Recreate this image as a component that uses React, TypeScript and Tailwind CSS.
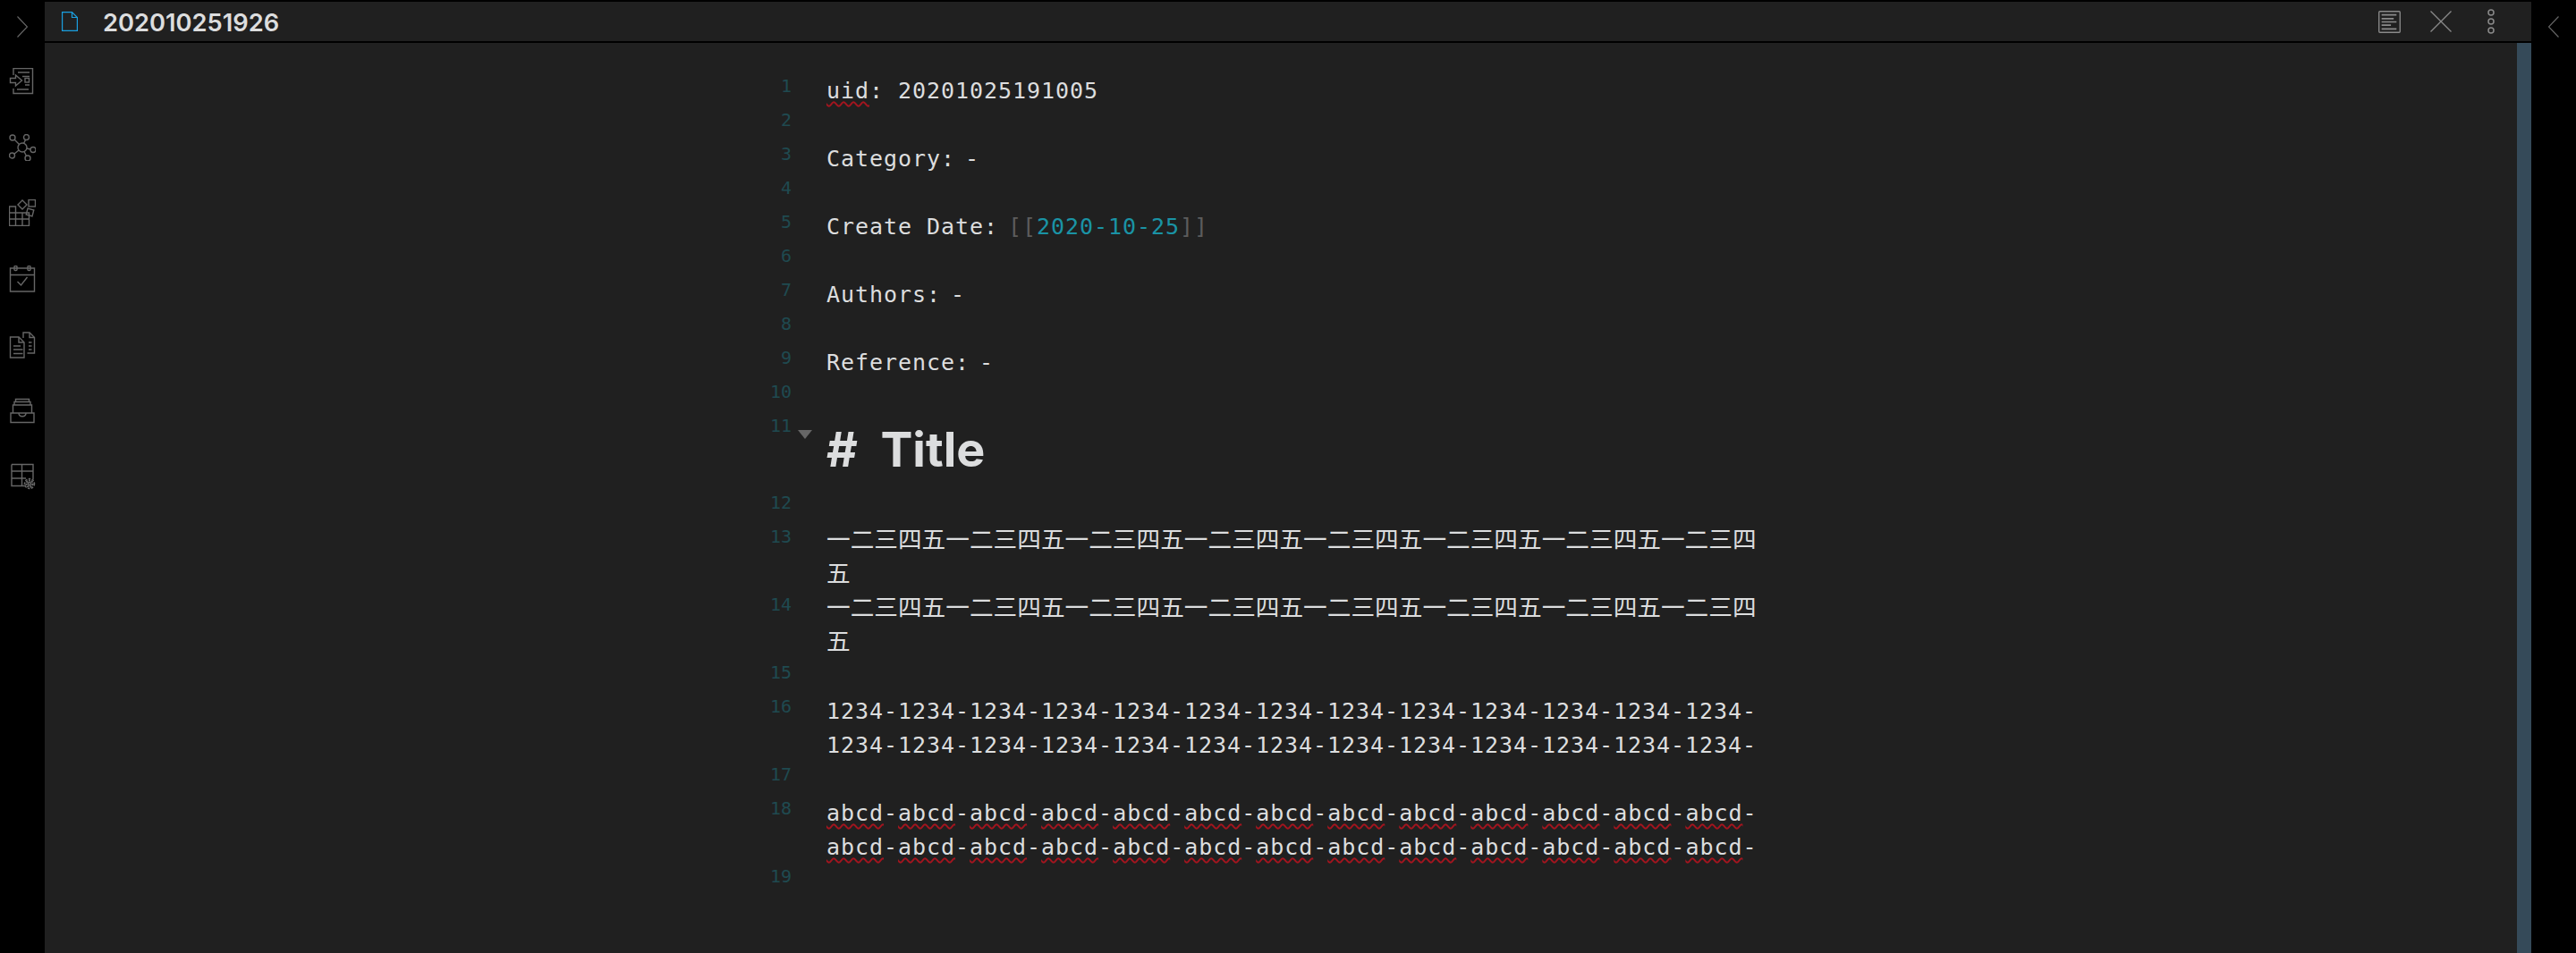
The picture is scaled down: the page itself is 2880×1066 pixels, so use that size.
import React from "react";

const Svg = ({ children, className = "" }: { children: React.ReactNode; className?: string }) => (
  <svg viewBox="0 0 30 30" fill="none" stroke="#666" strokeWidth="1.4" className={"w-[30px] h-[30px] " + className}>
    {children}
  </svg>
);

const sideIcons = [
  <Svg key="a">
    <path d="M5 8V0.5h21.5v28H5V23" />
    <path d="M10 5h13M15 9.5h8M22 24h-13M18 19h5" />
    <path d="M1.5 11.5h6V8l7 6-7 6v-3.5h-6z" />
    <rect x="18" y="11.5" width="4.5" height="4.5" />
  </Svg>,
  <Svg key="b">
    <circle cx="15" cy="15" r="5" />
    <circle cx="4" cy="4" r="3" />
    <circle cx="19.5" cy="3.5" r="3" />
    <circle cx="27" cy="17.5" r="3" />
    <circle cx="3.5" cy="24" r="3" />
    <circle cx="21" cy="27" r="3" />
    <path d="M6 6l5.5 5.5M18.5 6.5l-2 4M20 16l4 1M11 18l-5.500 4.500M17 19.500l2.500 5" />
  </Svg>,
  <Svg key="c">
    <path d="M0.500 8h7v21.500H0.500zM7.500 15h-7M0.500 22h22v7.500H0.500zM7.500 15h7.500v14.500M7.500 22v7.500M15 15h7.500v7.500" />
    <path d="M10 6l5-5 5 5-5 5z" />
    <rect x="22" y="0.500" width="7.500" height="7.500" />
    <rect x="20" y="11" width="7" height="7" transform="rotate(15 23.500 14.500)" />
  </Svg>,
  <Svg key="d">
    <path d="M1.500 3h27v26h-27zM1.500 10.500h27" />
    <rect x="6" y="0.500" width="3" height="5" rx="1" />
    <rect x="21" y="0.500" width="3" height="5" rx="1" />
    <path d="M9.500 18l4 4 7-9" />
  </Svg>,
  <Svg key="e">
    <path d="M16 7V1h7l5.500 5.500V24h-8" />
    <path d="M23 1v5.500h5.500M22 12h3.500M22 16h3.500M22 20h3.500" />
    <path d="M1.500 6h9.500l6 6v17H1.500z" />
    <path d="M11 6v6h6M5 16h8M5 20h10.500M5 24.500h10.500" />
  </Svg>,
  <Svg key="f">
    <path d="M2 18h26v10.500H2z" />
    <path d="M4.500 18V9h21v9M6 9V5.500h18V9M7.500 5.500V2.500h15v3" />
    <path d="M11 18c0 5 8 5 8 0" />
  </Svg>,
  <Svg key="g">
    <path d="M3 1.500h24v17M3 1.500v24h16M3 9h24M3 17h16M14.500 1.500v24" />
    <circle cx="23" cy="23" r="3.500" strokeWidth="2.500" strokeDasharray="2 1" />
    <circle cx="23" cy="23" r="5.500" strokeWidth="1.500" strokeDasharray="2.500 1.500" />
    <circle cx="23" cy="23" r="1.500" />
  </Svg>,
];

const Wavy = ({ children }: { children: React.ReactNode }) => (
  <span className="underline decoration-wavy decoration-[#a5141e] decoration-[1.5px] underline-offset-[3px]">{children}</span>
);

const Dash = () => <span className="-ml-[5px]">-</span>;

const abcd = (n: number) =>
  Array.from({ length: n }).map((_, i) => (
    <React.Fragment key={i}>
      <Wavy>abcd</Wavy>-
    </React.Fragment>
  ));

type Row = { content?: React.ReactNode; tall?: boolean; cjk?: boolean };

const cjk = "一二三四五".repeat(8);
const rows: Row[] = [
  { content: <><Wavy>uid</Wavy>: 20201025191005</> },
  {},
  { content: <>Category: <Dash /></> },
  {},
  {
    content: (
      <>
        Create Date: <span className="-ml-[5px] text-[#5c5c5c]">[[</span>
        <span className="text-[#1a93a5]">2020-10-25</span>
        <span className="text-[#5c5c5c]">]]</span>
      </>
    ),
  },
  {},
  { content: <>Authors: <Dash /></> },
  {},
  { content: <>Reference: <Dash /></> },
  {},
  { tall: true },
  {},
  { content: cjk, cjk: true },
  { content: cjk, cjk: true },
  {},
  { content: "1234-".repeat(26) },
  {},
  { content: abcd(26) },
  {},
];

export default function App() {
  return (
    <div className="flex h-[1066px] w-[2880px] overflow-hidden bg-black">
      <aside className="flex w-[50px] shrink-0 flex-col items-center pt-[18px]">
        <svg viewBox="0 0 12 24" fill="none" stroke="#666" strokeWidth="1.2" className="h-[24px] w-[12px]">
          <path d="M0.500 0.500L11.500 12L0.500 23.500" />
        </svg>
        <div className="mt-[34px] flex flex-col items-center gap-[43.7px]">{sideIcons}</div>
      </aside>

      <main className="flex min-w-0 flex-1 flex-col pt-[2px]">
        <header className="flex h-[44px] shrink-0 items-center bg-[#202020] pl-[19px] pr-[41px]">
          <svg viewBox="0 0 18 22" fill="none" stroke="#1a9fe0" strokeWidth="1.200" className="h-[22px] w-[18px]">
            <path d="M0.600 0.600H11.500L17.400 6.500V21.400H0.600zM11.500 0.600V6.500H17.400" />
          </svg>
          <div className="ml-[28px] flex-1 translate-y-[2px] font-['Inter',sans-serif] text-[27.3px] font-semibold leading-[44px] text-[#dcddde]">
            202010251926
          </div>
          <svg viewBox="0 0 24 24" fill="none" stroke="#8a8a8a" strokeWidth="1.300" className="h-[25px] w-[25px]">
            <rect x="0.700" y="0.700" width="22.600" height="22.600" rx="1" />
            <path d="M3.500 4.500h16M3.500 8.500h13M3.500 12h16M3.500 15.500h10M3.500 19.500h16" strokeWidth="1.600" />
          </svg>
          <svg viewBox="0 0 24 24" fill="none" stroke="#8a8a8a" strokeWidth="1.300" className="ml-[33px] h-[24px] w-[24px]">
            <path d="M0.500 0.500l23 23M23.500 0.500l-23 23" />
          </svg>
          <svg viewBox="0 0 8 28" fill="none" stroke="#8a8a8a" strokeWidth="1.500" className="ml-[40px] h-[28px] w-[8px]">
            <circle cx="4" cy="4" r="3" />
            <circle cx="4" cy="14" r="3" />
            <circle cx="4" cy="24" r="3" />
          </svg>
        </header>

        <div className="mt-[2px] flex min-h-0 flex-1 bg-[#202020]">
          <div className="min-w-0 flex-1 pl-[785px] pt-[34px] font-['DejaVu_Sans_Mono',monospace] text-[#dcddde]">
            {rows.map((r, i) => (
              <div key={i} className="flex">
                <div className="h-[30px] w-[50px] shrink-0 -translate-y-[1px] text-right text-[20px] leading-[30px] tracking-[-0.04px] text-[#1f4a50]">{i + 1}</div>
                <div className="w-[39px] shrink-0">
                  {r.tall && (
                    <svg viewBox="0 0 16 10" fill="#666" className="ml-[7px] mt-[19px] h-[10px] w-[16px]">
                      <path d="M0 0h16L8 10z" />
                    </svg>
                  )}
                </div>
                {r.tall ? (
                  <div className="h-[86px] whitespace-pre font-['Inter',sans-serif] text-[53.8px] font-bold leading-[82px] text-[#dcddde]">
                    {"#  Title"}
                  </div>
                ) : r.cjk ? (
                  <div className="w-[1045px] font-['Noto_Sans_CJK_SC',sans-serif] text-[26.67px] leading-[38px]">
                    <div className="-translate-y-[3px]">{r.content}</div>
                  </div>
                ) : (
                  <div className="min-h-[38px] w-[1045px] translate-y-[1px] break-words text-[25px] leading-[38px] tracking-[0.95px]">
                    {r.content}
                  </div>
                )}
              </div>
            ))}
          </div>
          <div className="h-full w-[16px] shrink-0 bg-[#354a59]" />
        </div>
      </main>

      <aside className="flex w-[50px] shrink-0 justify-center pt-[18px]">
        <svg viewBox="0 0 12 24" fill="none" stroke="#666" strokeWidth="1.2" className="h-[24px] w-[12px]">
          <path d="M11.500 0.500L0.500 12L11.500 23.500" />
        </svg>
      </aside>
    </div>
  );
}
